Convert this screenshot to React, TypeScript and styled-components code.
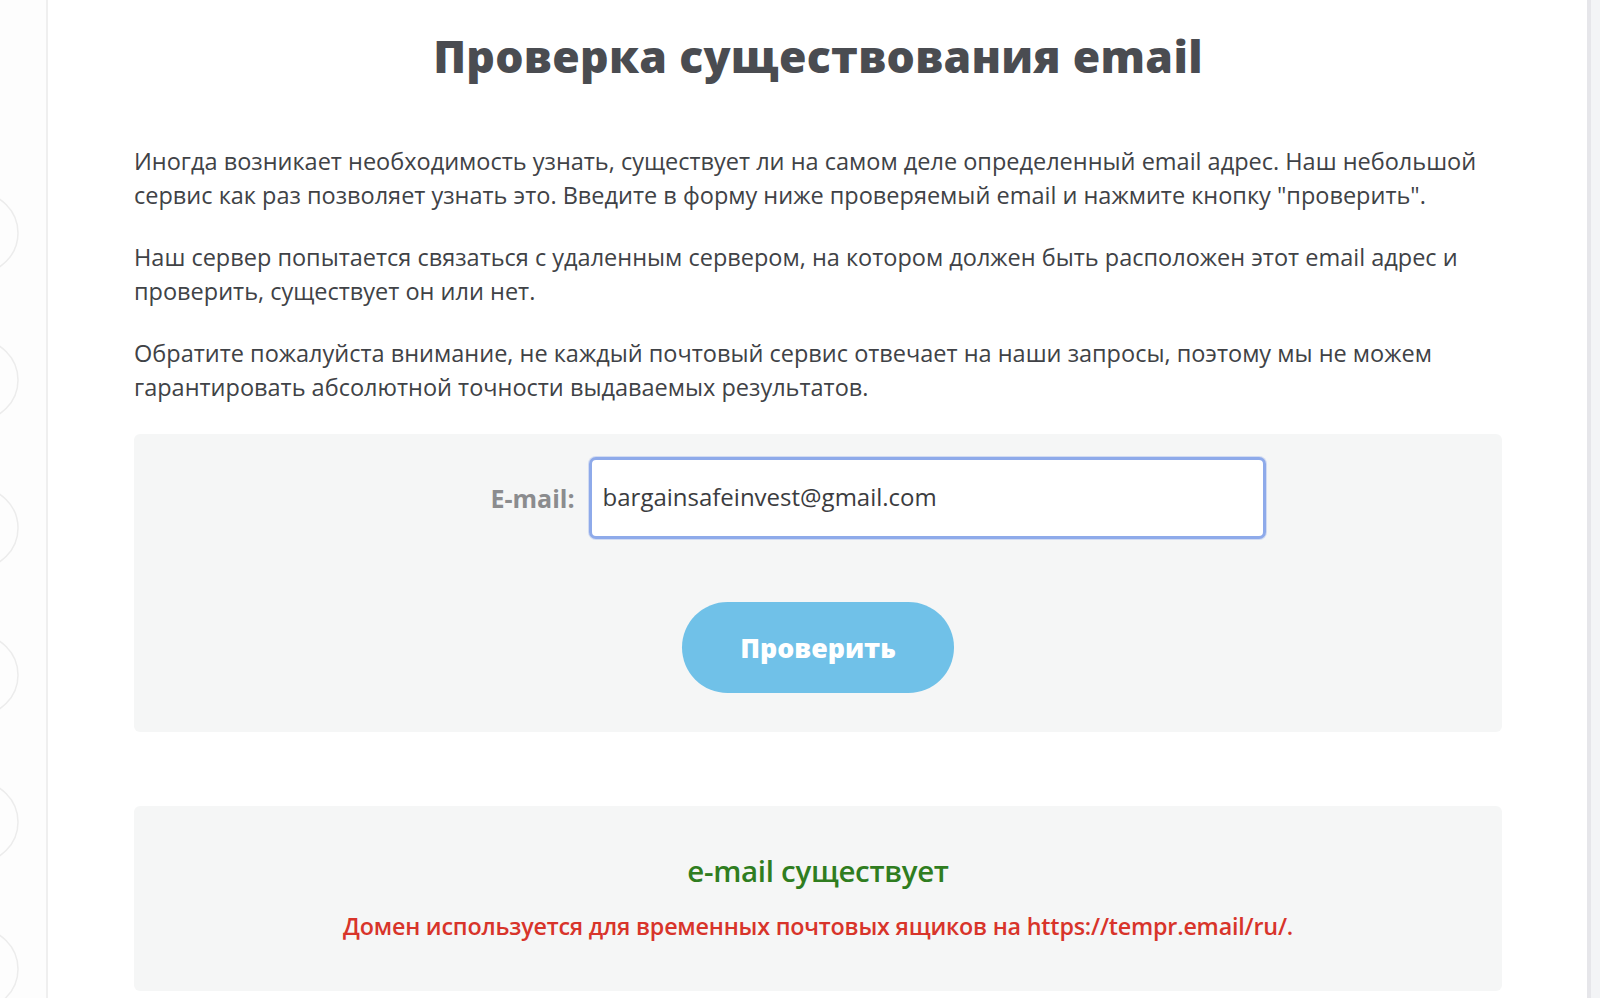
import React from 'react';
import styled, { createGlobalStyle } from 'styled-components';

const GlobalStyle = createGlobalStyle`
  html, body {
    margin: 0;
    padding: 0;
    background: #fff;
    font-family: "Open Sans", "Noto Sans", sans-serif;
  }
`;

const Page = styled.div`
  display: flex;
  height: 998px;
  overflow: hidden;
`;

const Sidebar = styled.aside`
  width: 46px;
  flex-shrink: 0;
  border-right: 2px solid #efefef;
  background: #fdfdfd;
`;

const Main = styled.main`
  flex: 1;
  padding: 0 85px 0 86px;
  background: #fff;
`;

const Track = styled.div`
  width: 9px;
  flex-shrink: 0;
  border-left: 4px solid #e6e6ea;
  background: #f3f4f6;
`;

const Title = styled.h1`
  margin: 24px 0 56px;
  text-align: center;
  font-family: "Open Sans", sans-serif;
  font-weight: 800;
  font-size: 44.5px;
  line-height: 64px;
  color: #4a4c51;
  letter-spacing: 0.3px;
`;

const Text = styled.p`
  margin: 0 0 28px;
  font-size: 23.5px;
  line-height: 34px;
  font-weight: 500;
  color: #404246;
`;

const Panel = styled.section`
  background: #f5f6f6;
  border-radius: 6px;
  display: flex;
  flex-direction: column;
  align-items: center;
`;

const FormPanel = styled(Panel)`
  margin-top: 30px;
  padding: 23px 0 39px;
  gap: 63px;
`;

const FieldRow = styled.div`
  display: flex;
  align-items: center;
  gap: 14px;
  margin-left: 120px;
`;

const Label = styled.label`
  font-size: 25px;
  font-weight: 700;
  color: #8b8c8e;
`;

const Input = styled.input`
  box-sizing: border-box;
  width: 677px;
  height: 82px;
  border: 3px solid #8eaaea;
  border-radius: 7px;
  box-shadow: 0 0 0 1px rgba(142, 170, 234, 0.35);
  background: #fff;
  padding: 0 11px 3px;
  font-family: "Open Sans", sans-serif;
  font-size: 24px;
  font-weight: 500;
  color: #3b3c40;
  outline: none;
`;

const Button = styled.button`
  width: 272px;
  height: 91px;
  border: none;
  border-radius: 46px;
  background: #70c1e8;
  color: #fff;
  font-family: "Open Sans", sans-serif;
  font-weight: 800;
  font-size: 26.8px;
  cursor: pointer;
`;

const ResultPanel = styled(Panel)`
  margin-top: 74px;
  padding: 44px 0 49px;
  gap: 19px;
`;

const Status = styled.div`
  font-size: 29.5px;
  font-weight: 600;
  color: #2f7d20;
  letter-spacing: -0.3px;
`;

const Warning = styled.div`
  font-size: 23.3px;
  font-weight: 600;
  color: #d8342a;
  letter-spacing: -0.2px;
`;

const Circles = () => (
  <svg width="46" height="998" viewBox="0 0 46 998">
    {[233, 380, 528, 675, 822, 969].map((cy) => (
      <circle key={cy} cx={-22} cy={cy} r={40} fill="none" stroke="#ececec" strokeWidth={1.5} />
    ))}
  </svg>
);

export default function App() {
  return (
    <>
      <GlobalStyle />
      <Page>
        <Sidebar>
          <Circles />
        </Sidebar>
        <Main>
          <Title>Проверка существования email</Title>
          <Text>
            Иногда возникает необходимость узнать, существует ли на самом деле определенный email адрес. Наш небольшой
            сервис как раз позволяет узнать это. Введите в форму ниже проверяемый email и нажмите кнопку "проверить".
          </Text>
          <Text>
            Наш сервер попытается связаться с удаленным сервером, на котором должен быть расположен этот email адрес и
            проверить, существует он или нет.
          </Text>
          <Text>
            Обратите пожалуйста внимание, не каждый почтовый сервис отвечает на наши запросы, поэтому мы не можем
            гарантировать абсолютной точности выдаваемых результатов.
          </Text>
          <FormPanel>
            <FieldRow>
              <Label htmlFor="email">E-mail:</Label>
              <Input id="email" defaultValue="bargainsafeinvest@gmail.com" />
            </FieldRow>
            <Button>Проверить</Button>
          </FormPanel>
          <ResultPanel>
            <Status>e-mail существует</Status>
            <Warning>Домен используется для временных почтовых ящиков на https://tempr.email/ru/.</Warning>
          </ResultPanel>
        </Main>
        <Track />
      </Page>
    </>
  );
}
